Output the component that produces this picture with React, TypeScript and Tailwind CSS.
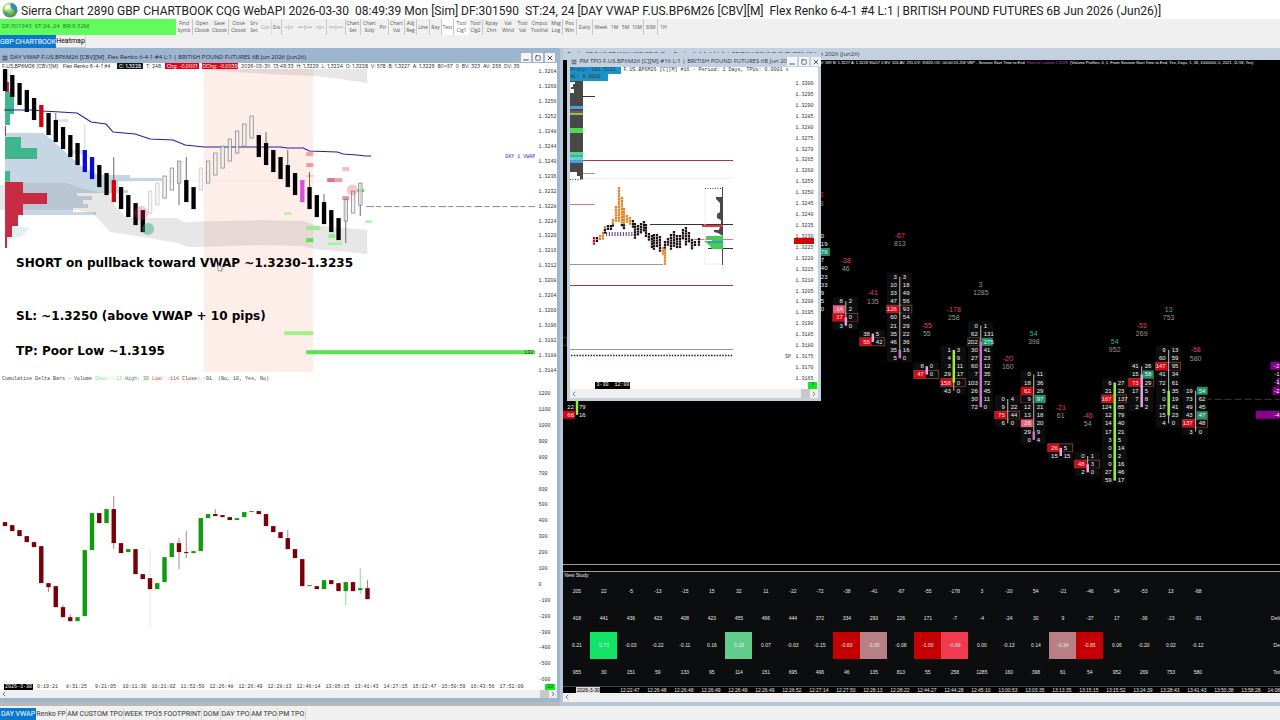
import { Menu, Minus, Square, X, ChevronLeft, ChevronRight } from "lucide-react";
import clsx from "clsx";

const SANS = "font-['Open_Sans','Noto_Sans',sans-serif]";
const UI = "font-['Roboto','Noto_Sans',sans-serif]";
const MONO = "font-['Liberation_Mono',monospace]";

const INSTRUMENT = "F.US.BP6M26 [CBV][M]  Flex Renko 6-4-1 #4 L:1 | BRITISH POUND FUTURES 6B Jun 2026 (Jun26)";

type Tool = [label: string, width: string, look?: string];

const tools: Tool[] = [
  ["Find\nSymb", "w-[17px]", "border-r"],
  ["Open\nCbook", "w-[18px]"],
  ["Save\nCbook", "w-[18px]", "border-r"],
  ["Close\nCbook", "w-[19px]"],
  ["Srv\nSet", "w-[12px]"],
  ["Con", "w-[12px]", "border-r opacity-50"],
  ["Dis", "w-[10px]", "border-r"],
  ["<|>", "w-[14px]"],
  ["<<|>>", "w-[18px]"],
  [">|<", "w-[13px]", "border-r"],
  [">>|<<", "w-[19px]", "border-r"],
  ["Chart\nSet", "w-[15px]", "border-r"],
  ["Chart\nStdy", "w-[17px]"],
  ["Ptr", "w-[11px]", "border-r"],
  ["Chart\nVal", "w-[16px]", "border-r"],
  ["Adj\nReg", "w-[12px]", "border-r"],
  ["Line", "w-[13px]", "border-r"],
  ["Ray", "w-[12px]", "border-r"],
  ["Text", "w-[12px]", "border-r bg-white"],
  ["Tool\nClg1", "w-[15px]", "bg-white"],
  ["Tool\nClg2", "w-[14px]", "border-r"],
  ["Rplay\nChrt", "w-[17px]"],
  ["Val\nWind", "w-[16px]"],
  ["Tool\nVal", "w-[13px]"],
  ["Cmput\nToolVal", "w-[21px]"],
  ["Msg\nLog", "w-[13px]", "border-r"],
  ["Pos\nWin", "w-[14px]", "border-r"],
  ["Daily", "w-[16px]", "border-r"],
  ["Week", "w-[16px]"],
  ["1M", "w-[11px]"],
  ["5M", "w-[11px]"],
  ["10M", "w-[13px]", "border-r"],
  ["30M", "w-[14px]", "border-r"],
  ["1H", "w-[11px]"],
];

const chartTabs: [string, string][] = [
  ["Renko FP", "w-[31px]"],
  ["AM CUSTOM TPO", "w-[57px]"],
  ["WEEK TPO", "w-[34px]"],
  ["5 FOOTPRINT", "w-[44px]"],
  ["DOM", "w-[19px]"],
  ["DAY TPO", "w-[30px]"],
  ["AM TPO", "w-[27px]"],
  ["PM TPO", "w-[28px]"],
];

const Globe = () => (
  <svg viewBox="0 0 16 16" className="size-4 shrink-0">
    <defs>
      <radialGradient id="globe" cx="0.4" cy="0.3" r="0.8">
        <stop offset="0" stopColor="#f4ffd0" />
        <stop offset="0.5" stopColor="#7cc242" />
        <stop offset="1" stopColor="#2f7d3a" />
      </radialGradient>
    </defs>
    <circle cx="8" cy="8" r="7.5" fill="url(#globe)" />
    <path d="M9 1C13 2 15.500 5 15.300 9C14 12 12 11 12 8C9 7 8 4 9 1Z" fill="#2f86c9" />
    <path d="M2 10C5 9 8 12 7 15C4 15 2 13 2 10Z" fill="#3b8fd0" opacity="0.7" />
    <path d="M4 3C6 2 8 3 8 5C6 6 5 8 3 8C2 6 3 4 4 3Z" fill="#fbffe8" opacity="0.8" />
  </svg>
);

const WindowButtons = () => (
  <div className="flex shrink-0 gap-[2px]">
    {[Minus, Square, X].map((Icon, i) => (
      <button key={i} type="button" aria-label={["Minimize", "Maximize", "Close"][i]} className="flex h-[9px] w-[10px] items-center justify-center bg-[#f4f5f7] text-black">
        <Icon size={i === 1 ? 6 : 8} strokeWidth={2} className={i === 0 ? "mt-1" : ""} />
      </button>
    ))}
  </div>
);

const ScrollBar = ({ className = "", thumb = true }: { className?: string; thumb?: boolean }) => (
  <div className={clsx("flex items-center justify-between bg-[#f0f0f0] text-gray-700", className)}>
    <button type="button" aria-label="Scroll left">
      <ChevronLeft size={8} />
    </button>
    {thumb && (
      <>
        <div className="ml-auto h-full w-[9px] bg-[#c8c8c8]" />
        <button type="button" aria-label="Scroll right">
          <ChevronRight size={8} />
        </button>
      </>
    )}
  </div>
);

const Axis = ({ labels, className }: { labels: (string | number)[]; className: string }) => (
  <div className={clsx("flex shrink-0 flex-col justify-between text-[5px] leading-[6px] text-[#333]", MONO, className)}>
    {labels.map((l, i) => (
      <span key={i}>{l}</span>
    ))}
  </div>
);

/* ---------- Day VWAP chart ---------- */

const STEP = 7.245;

// [top of body, kind, wick top, wick bottom]
type Bar = [number, string, number?, number?];
const renko: Bar[] = [
  [69, "d"], [75, "d"], [83, "d"], [90, "d"], [98, "d"], [105, "r"], [113, "d"], [120, "d", 113], [127, "d"], [135, "d"],
  [143, "d"], [150, "b", 125], [157, "b"], [165, "d"], [173, "d"], [180, "r", 157], [187, "d"], [195, "d"], [203, "d"], [210, "d"],
  [191, "f"], [183, "f"], [176, "u"], [168, "u"], [161, "u", 161, 205], [180, "d", 157], [187, "d"], [168, "f"], [161, "u"], [153, "u"],
  [146, "u"], [139, "u"], [131, "u"], [124, "u"], [116, "u"], [135, "d"], [143, "d", 132], [150, "d"], [157, "d"], [165, "d", 150],
  [173, "d"], [180, "m"], [187, "d", 172], [195, "d"], [202, "d", 194], [210, "d"], [218, "d"], [199, "u", 199, 243], [191, "u"], [183, "u", 183, 216],
];
const renkoFill: Record<string, string> = { d: "#000", r: "#d4000c", b: "#0808e0", m: "#d850dc", u: "#eef0ee", f: "#f1f1ef" };

// [top, bottom, up, wick top, wick bottom]
type Delta = [number, number, number, number?, number?];
const delta: Delta[] = [
  [522, 526, 0], [525, 531, 0], [530, 536, 0], [536, 542, 0], [542, 547, 0], [546, 583, 0], [583, 587, 0, 583, 592], [586, 607, 0],
  [607, 617, 0, 605, 617], [617, 621, 0, 614, 621], [617, 621, 1], [550, 616, 1], [513, 550, 1], [513, 523, 0], [509, 523, 1],
  [509, 543, 0, 496, 549], [543, 553, 0], [549, 552, 1], [549, 574, 0], [574, 579, 0], [578, 589, 0, 550, 627], [583, 589, 1],
  [557, 582, 1], [543, 557, 1], [543, 552, 0, 538, 569], [552, 553, 0, 531, 558], [551, 553, 1], [518, 551, 1], [514, 518, 1],
  [514, 516, 0, 509, 516], [515, 517, 0], [517, 520, 0], [518, 520, 1], [512, 517, 1], [511, 512, 1], [511, 514, 0], [514, 526, 0],
  [526, 532, 0], [532, 538, 0], [538, 549, 0, 530, 549], [549, 558, 0], [559, 586, 0], [585, 586, 1], [586, 589, 0], [580, 589, 1],
  [580, 584, 0], [583, 591, 0], [582, 591, 1, 582, 605], [582, 591, 0], [588, 590, 1, 568, 594], [588, 599, 0, 580, 599],
];

const markers: [number, number, number, number, string][] = [
  [306, 152, 7, 4, "#f5a0a8"], [306, 163, 7, 4, "#f59aa2"], [306, 175, 7, 2, "#f9c0bc"], [327, 178, 8, 4, "#cf7c86"], [335, 178, 7, 4, "#eaa3aa"],
  [342, 167, 7, 4, "#f6bcc2"], [357, 189, 7, 3, "#58e070"], [365, 220, 7, 3, "#b8f5b8"], [284, 212, 7, 3, "#bdeea6"], [306, 226, 14, 4, "#a5e59b"],
  [306, 238, 7, 4, "#5ce04c"], [328, 234, 7, 4, "#90f08a"], [328, 242, 14, 3, "#a6f2a0"], [284, 331, 29, 4, "#a2f088"],
];

const VwapChart = () => (
  <svg viewBox="0 69 535 305" className="min-w-0 flex-1 bg-white">
    <rect x="204" y="69" width="109" height="303" fill="#fdeee9" />
    <path d="M5 69H14L9 78L12 82H5ZM5 225L30 228L22 236L8 240Z" fill="#dff0ee" />
    <path
      d="M5 133H43L52 140L63 150L74 160L84 168L98 175H130V178H162V181H118V190H128V193H77V196H92V200H83V204H88V208H73V212H96V215H5Z"
      fill="#c6d6e5"
    />
    <path d="M55 119H68V122H60ZM68 150H86V154H72Z" fill="#dbe4ee" />
    <path d="M200 69H367V83L340 79L315 76L285 75L250 73L220 71Z" fill="#8a8080" opacity="0.2" />
    <path
      d="M0 185L25 183L66 183L80 188L108 194L115 206L127 218L177 218L184 222L260 220L303 221L315 225L367 230V254L315 249L303 246L260 245L200 247L187 247L177 243L130 235L110 232L93 213L77 210L0 210Z"
      fill="#807878"
      opacity="0.18"
    />
    <path d="M5 92H14V114H10V125H5ZM5 137H21V148H37V159H5ZM5 171H10V182H5Z" fill="#40b68c" />
    <path d="M5 182H23V193H47V204H23V215H18V226H12V237H7V248H5ZM5 82H9V92H5ZM5 126H6V136H5Z" fill="#c82c44" />
    <path d="M0 181H350" stroke="#d9cfc9" strokeWidth="0.5" opacity="0.6" />
    <path d="M366 206.500H535" stroke="#555" strokeDasharray="8 2 5 3" strokeWidth="0.7" />

    {markers.map(([x, y, w, h, fill]) => (
      <rect key={`${x}-${y}`} x={x} y={y} width={w} height={h} fill={fill} />
    ))}
    <path d="M4 110H33L43 111L77 113L91 122L106 124L113 132L135 134L150 139L173 140L185 145L204 147H280L287 148H303L309 151L337 152L343 154L357 155L365 156H371" fill="none" stroke="#2020a0" strokeWidth="1.100" />
    {renko.map(([y, kind, hi, lo], i) => {
      const x = 5 + STEP * i;
      const hollow = kind === "u" || kind === "f";
      return (
        <g key={i}>
          {hi && <path d={`M${x} ${hi}V${lo ?? y}`} stroke={kind === "b" ? "#ccc" : "#444"} strokeWidth="0.8" />}
          <rect
            x={hollow ? x - 1.6 : x - 2.1}
            y={y}
            width={hollow ? 3.4 : 4.3}
            height="22"
            fill={renkoFill[kind]}
            fillOpacity={hollow ? 0.7 : 1}
            stroke={kind === "u" ? "#8b8b8b" : kind === "f" ? "#cdcdcd" : "none"}
            strokeWidth="0.8"
          />
        </g>
      );
    })}
    <circle cx="141" cy="213" r="7" fill="#d83a58" opacity="0.3" />
    <circle cx="148" cy="229" r="6" fill="#2fa878" opacity="0.45" />
    <circle cx="352" cy="190" r="5.500" fill="#e04858" opacity="0.3" />
    <rect x="342" y="196" width="7" height="4" fill="#d8586a" opacity="0.6" />

    <rect x="306" y="350" width="229" height="4" fill="#54e84c" />
    <g className={clsx("text-[5px]", MONO)}>
      <text x="505" y="158" fill="#3030b8">DAY 1 VWAP</text>
      <text x="524" y="354" fill="#064006">132</text>
    </g>
    <g className="font-['DejaVu_Sans',sans-serif] text-[12px] font-bold">
      <text x="16" y="267">SHORT on pullback toward VWAP ~1.3230–1.3235</text>
      <text x="16" y="320">SL: ~1.3250 (above VWAP + 10 pips)</text>
      <text x="16" y="355">TP: Poor Low ~1.3195</text>
    </g>
    <path d="M218 264V271L220 270L221 272L222 271L221 269H223Z" fill="#fff" stroke="#555" strokeWidth="0.5" />
  </svg>
);

const DeltaChart = () => (
  <svg viewBox="0 384 535 299" className="min-w-0 flex-1 bg-white">
    {delta.map(([top, bottom, up, hi, lo], i) => {
      const x = 5 + STEP * i;
      return (
        <g key={i}>
          {hi && <path d={`M${x} ${hi}V${lo}`} stroke={i === 20 ? "#ddd" : up ? "#60d868" : "#a86068"} strokeWidth="0.8" />}
          <rect x={x - 2.2} y={top} width="4.400" height={bottom - top} fill={up ? "#0f9a10" : "#7a0008"} />
        </g>
      );
    })}
  </svg>
);

const vwapPrices = Array.from({ length: 21 }, (_, i) => (1.3264 - i * 0.0004).toFixed(4));
const deltaTicks = Array.from({ length: 19 }, (_, i) => 1200 - i * 100);
const vwapTimes = [
  "0:19:21", "8:31:25", "9:21:05", "10:11:30", "10:21:02", "11:52:50", "12:26:48", "12:26:49", "12:28:13",
  "12:46:14", "13:05:15", "13:41:43", "14:27:15", "15:12:47", "15:50:59", "16:43:56", "17:52:09",
];

const VwapWindow = () => (
  <section className="min-w-0 flex-[7] border-r-[3px] border-b-[4px] border-[#9db5cf] bg-white">
    <header className="flex h-[15px] items-end justify-between bg-[#9db5cf] pr-[2px] pb-px pl-[2px]">
      <div className="flex items-center gap-[2px] text-[6px] leading-[9px] whitespace-pre text-[#223]">
        <Menu size={6} strokeWidth={3} />
        DAY VWAP {INSTRUMENT}
      </div>
      <WindowButtons />
    </header>
    <div className="flex h-[6px] gap-[3px] overflow-hidden pl-[2px] font-['Inter',sans-serif] text-[5px] leading-[6px] whitespace-pre text-[#333]">
      <span className="w-[112px] shrink-0">F.US.BP6M26 [CBV][M]   Flex Renko 6-4-1 #4</span>
      <span className="w-[26px] shrink-0 bg-[#101820] text-center text-white">C: 1.3228</span>
      <span className="w-[16px] shrink-0">T: 248</span>
      <span className="w-[34px] shrink-0 bg-[#e00010] text-center text-white">Chg: -0.0001</span>
      <span className="w-[36px] shrink-0 bg-[#e00010] text-center text-white">OChg: -0.0039</span>
      <span>
        2026-03-30  13:49:33  H: 1.3229  L: 1.3224  O: 1.3228  V: 578  B: 1.3227  A: 1.3229  80x57  0  BV: 323  AV: 255  DV: 35
      </span>
    </div>
    <div className="flex">
      <VwapChart />
      <Axis labels={vwapPrices} className="w-[22px] pl-[3px]" />
    </div>
    <div className={clsx("flex h-[10px] gap-[3px] pl-[2px] text-[5px] leading-[10px] text-[#444]", MONO)}>
      <span>Cumulative Delta Bars - Volume</span>
      <span className="text-[#70f080]">Open: -13</span>
      <span className="text-[#4a8a50]">High: 30</span>
      <span className="text-[#d04050]">Low: -114</span>
      <span>Close: -91</span>
      <span className="pl-[3px]">(No, 10, Yes, No)</span>
    </div>
    <div className="flex">
      <DeltaChart />
      <Axis labels={deltaTicks} className="w-[22px] pt-[7px] pl-[3px]" />
    </div>
    <div className={clsx("flex h-[7px] items-center overflow-hidden text-[5px] leading-[6px] text-[#333]", MONO)}>
      <span className="ml-1 w-[29px] shrink-0 bg-black text-center text-white">2026-3-30</span>
      {vwapTimes.map((t) => (
        <span key={t} className="w-[29px] shrink-0 text-center">
          {t}
        </span>
      ))}
      <span className="mr-[2px] ml-auto w-[10px] shrink-0 bg-[#10e820] text-center text-green-900">22</span>
    </div>
    <ScrollBar className="h-[8px]" />
  </section>
);

/* ---------- Footprint chart ---------- */

// flags: r red bid, p pink bid, l outlined bid, g green ask, o outlined row
type Cell = [bid: string, ask: string, flags?: string];
type Column = { x: number; row: number; delta: string; total: string; cells: Cell[]; body?: [number, number, string] };

const VIOLET = "#cc70d4";
const PINK = "#e8a0e8";
const LIME = "#98f03c";

const columns: Column[] = [
  { x: 846, row: 3, delta: "-38", total: "46", cells: [["8", "2"], ["14", "2", "p"], ["17", "0", "ro"], ["3", "0"]], body: [2, 3, PINK] },
  { x: 873, row: 7, delta: "-41", total: "135", cells: [["38", "5"], ["58", "42", "ro"]], body: [0, 1, PINK] },
  {
    x: 900, row: 0, delta: "-67", total: "813", body: [9, 10, VIOLET],
    cells: [["3", "3"], ["10", "18"], ["33", "49"], ["47", "56"], ["126", "93", "ro"], ["60", "54"], ["21", "29"], ["35", "22"], ["46", "36"], ["35", "16"], ["5", "0"]],
  },
  { x: 927, row: 11, delta: "-55", total: "55", cells: [["8", "0"], ["47", "0", "ro"]], body: [0, 1, PINK] },
  { x: 954, row: 9, delta: "-178", total: "258", cells: [["1", "3"], ["4", "9"], ["3", "11"], ["29", "17"], ["158", "0", "ro"], ["43", "0"]], body: [0, 4, LIME] },
  {
    x: 981, row: 6, delta: "3", total: "1285", body: [2, 10, VIOLET],
    cells: [["0", "1"], ["62", "131"], ["202", "275", "lg"], ["30", "41"], ["27", "23"], ["60", "12"], ["7", "35"], ["103", "72"], ["26", "45"], ["30", "11"], ["72", "0"]],
  },
  { x: 1008, row: 15, delta: "-20", total: "160", cells: [["0", "4"], ["9", "22"], ["75", "44", "ro"], ["6", "0"]] },
  {
    x: 1034, row: 12, delta: "54", total: "398", body: [7, 8, VIOLET],
    cells: [["0", "11"], ["18", "36"], ["62", "29", "r"], ["9", "97", "lg"], ["12", "21"], ["13", "18"], ["28", "20", "p"], ["29", "9"], ["0", "4"]],
  },
  { x: 1061, row: 21, delta: "-21", total: "61", cells: [["26", "5", "ro"], ["15", "15"]], body: [0, 1, PINK] },
  { x: 1088, row: 22, delta: "-46", total: "54", cells: [["0", "1"], ["48", "3", "ro"], ["2", "0"]], body: [1, 2, PINK] },
  {
    x: 1115, row: 13, delta: "54", total: "952", body: [0, 12, LIME],
    cells: [["6", "27"], ["21", "23"], ["167", "137", "ro"], ["124", "85"], ["12", "79"], ["14", "40"], ["17", "21"], ["3", "5"], ["0", "14"], ["0", "2"], ["0", "16"], ["27", "46"], ["59", "17"]],
  },
  { x: 1142, row: 11, delta: "-53", total: "269", cells: [["41", "26"], ["15", "58", "g"], ["73", "29", "ro"], ["17", "5"], ["7", "8"], ["2", "2"]], body: [1, 5, PINK] },
  {
    x: 1169, row: 9, delta: "13", total: "753", body: [5, 8, LIME],
    cells: [["9", "13"], ["60", "59"], ["147", "95", "ro"], ["41", "34"], ["72", "61"], ["5", "35"], ["0", "19"], ["17", "41"], ["15", "23"], ["4", "0"]],
  },
  { x: 1196, row: 14, delta: "-68", total: "580", cells: [["19", "54", "g"], ["73", "62"], ["49", "45"], ["43", "47", "g"], ["137", "48", "ro"], ["3", "0"]] },
];

const ROW = 8.16;
const rowY = (r: number) => 276.7 + ROW * r;

const FootprintColumn = ({ x, row, delta, total, cells, body }: Column) => (
  <g>
    <text x={x} y={rowY(row - 5) + 2.5} textAnchor="middle" className="text-[7px]" fill={delta.startsWith("-") ? "#e84058" : "#2fb88c"}>
      {delta}
    </text>
    <text x={x} y={rowY(row - 4) + 2.5} textAnchor="middle" className="text-[7px]" fill="#989898">
      {total}
    </text>
    {cells.map(([bid, ask, flags = ""], i) => {
      const y = rowY(row + i);
      const left = flags.includes("r") ? "#dc0410" : flags.includes("p") ? "#f0607c" : "#0e0e0e";
      return (
        <g key={i}>
          <rect x={x - 13} y={y - 4} width="12" height="8" fill={left} stroke={flags.includes("l") ? "#7a4540" : "none"} strokeWidth="0.7" />
          <rect x={x + 1} y={y - 4} width="11" height="8" fill={flags.includes("g") ? "#20946c" : "#0e0e0e"} />
          {flags.includes("o") && <rect x={x - 13} y={y - 4} width="25" height="8" fill="none" stroke="#8a4a3c" strokeWidth="0.8" />}
          <text x={x - 3} y={y + 2} textAnchor="end">{bid}</text>
          <text x={x + 3} y={y + 2}>{ask}</text>
        </g>
      );
    })}
    <path d={`M${x} ${rowY(row)}V${rowY(row + cells.length - 1)}`} stroke="#c8c8c8" strokeWidth="1" />
    {body && <path d={`M${x} ${rowY(row + body[0])}V${rowY(row + body[1])}`} stroke={body[2]} strokeWidth="2.500" />}
  </g>
);

const hiddenAsks = ["0", "19", "76", "7", "40", "23", "33", "9", "5", "0"];

const FootprintChart = () => (
  <svg viewBox="563 66 717 498" className="block w-full bg-black font-['Liberation_Sans',sans-serif] text-[6px]" fill="#f0f0f0">
    <path d="M1205 399.500H1280" stroke="#3c3c3c" strokeDasharray="7 3" />
    <rect x="820" y="248" width="10" height="8" fill="#20946c" />
    <text x="820" y="197" fill="#d83a50" className="text-[7px]">2</text>
    <text x="820" y="206" fill="#8a8a8a" className="text-[7px]">8</text>
    {hiddenAsks.map((v, i) => (
      <text key={i} x="821" y={rowY(i - 5) + 2}>{v}</text>
    ))}
    {columns.map((c) => (
      <FootprintColumn key={c.x} {...c} />
    ))}
    <rect x="563" y="411" width="12" height="8" fill="#dc0410" />
    <text x="574" y="409" textAnchor="end">22</text>
    <text x="579" y="409">79</text>
    <text x="574" y="417" textAnchor="end">66</text>
    <text x="579" y="417">16</text>
    <path d="M577 395V415" stroke={LIME} strokeWidth="2.500" />
    <path d="M563 337.500H567V345.500H563" stroke="#6a3a30" strokeWidth="0.8" fill="none" />
    <path d="M1271 362H1280V370H1271ZM1277 378H1280V386H1277ZM1273 387H1280V395H1273ZM1256 411H1280V419H1256Z" fill="#8a0090" />
    <g fill="#fff" textAnchor="end">
      <text x="1280" y="368">-2</text>
      <text x="1280" y="376">-1</text>
      <text x="1280" y="384">-1</text>
      <text x="1280" y="393">-2</text>
      <text x="1280" y="417">-4</text>
    </g>
  </svg>
);

const studyRows = [
  ["205", "22", "-5", "-13", "-15", "15", "32", "11", "-22", "-72", "-38", "-41", "-67", "-55", "-178", "3", "-20", "54", "-21", "-46", "54", "-53", "13", "-68"],
  ["418", "441", "436", "423", "408", "423", "455", "466", "444", "372", "334", "293", "226", "171", "-7", "-4", "-24", "30", "9", "-37", "17", "-36", "-23", "-91"],
  ["0.21", "0.73", "-0.03", "-0.22", "-0.11", "0.16", "0.28", "0.07", "-0.03", "-0.15", "-0.83", "-0.30", "-0.08", "-1.00", "-0.69", "0.00", "-0.13", "0.14", "-0.34", "-0.85", "0.06", "-0.20", "0.02", "-0.12"],
  ["955", "30", "151", "59", "133", "95", "114", "151", "695", "496", "46", "135", "813", "55", "258", "1285", "160", "398", "61", "54", "952", "269", "753", "580"],
];
const studyLabels = ["", "Delt", "De", "Tot"];
const studyHeat: Record<number, string> = {
  1: "bg-[#12e468]", 6: "bg-[#62cc8c]", 10: "bg-[#c40004]", 11: "bg-[#b87f84]", 13: "bg-[#c40004]", 14: "bg-[#f03a50]", 18: "bg-[#b87f84]", 19: "bg-[#c40004]",
};
const studyTimes = [
  "12:22:47", "12:26:48", "12:26:48", "12:26:49", "12:26:49", "12:26:49", "12:26:52", "12:27:14", "12:27:50", "12:28:13", "12:28:22", "12:44:27", "12:44:28",
  "12:45:10", "13:00:53", "13:03:35", "13:13:35", "13:15:15", "13:15:52", "13:24:39", "13:28:43", "13:41:43", "13:50:38", "13:58:28",
];

const StudyPane = () => (
  <div className="overflow-hidden border-t border-[#9a9a9a] bg-[#0b0d0e] font-['Liberation_Sans',sans-serif] text-[5px] leading-[6px] text-[#e8e8e8]">
    <h2 className="h-[6px] pl-px">New Study</h2>
    <table className="w-full table-fixed border-collapse text-center">
      <tbody>
        {studyRows.map((row, r) => (
          <tr key={r} className="h-[27px]">
            {row.map((v, c) => (
              <td key={c} className={clsx("w-[27px] p-0", r === 2 && studyHeat[c])}>
                {v}
              </td>
            ))}
            <td className="p-0 text-right">{studyLabels[r]}</td>
          </tr>
        ))}
      </tbody>
    </table>
    <div className="flex h-[7px] overflow-hidden border-t border-[#444] bg-black whitespace-nowrap">
      <div className="flex w-[53px] shrink-0 pl-[13px]">
        <span className="w-[24px] bg-[#ddd] text-center text-black">2026-3-30</span>
      </div>
      {studyTimes.map((t, i) => (
        <span key={i} className="w-[27px] shrink-0 text-center">
          {t}
        </span>
      ))}
      <span className="ml-auto">14:08</span>
    </div>
  </div>
);

/* ---------- TPO window ---------- */

// [x, top, bottom, orange down to]
const tpoColumns: [number, number, number, number][] = [
  [594, 236, 244, 0], [597, 236, 242, 0], [600, 234, 240, 237], [603, 231, 238, 237], [605, 225, 232, 227], [608, 224, 230, 0], [611, 224, 229, 0], [613, 218, 227, 222],
  [616, 205, 222, 222], [619, 186, 222, 222], [622, 196, 227, 222], [624, 207, 228, 222], [627, 214, 222, 222], [630, 216, 224, 222], [633, 219, 227, 0], [635, 222, 239, 0],
  [638, 224, 234, 0], [641, 222, 232, 0], [644, 220, 230, 0], [646, 223, 237, 0], [649, 232, 241, 0], [652, 234, 248, 0], [654, 233, 250, 0], [657, 233, 247, 0],
  [660, 235, 250, 0], [663, 246, 254, 256], [665, 240, 263, 0], [668, 237, 246, 0], [671, 233, 249, 0], [674, 230, 246, 0], [677, 234, 248, 0], [680, 234, 247, 0],
  [683, 228, 240, 0], [686, 226, 246, 0], [689, 231, 243, 0], [692, 238, 249, 0], [695, 240, 246, 0], [699, 237, 244, 0],
];

const tpoStripes: [number, number, string][] = [
  [105, 3, "#4c9ce4"], [110, 2, "#c83a3a"], [112, 2, "#58d858"], [127, 5, "#4fdc54"], [151, 3, "#4fdc74"], [154, 2, "#4c9ce4"], [156, 3, "#60e0a0"], [159, 3, "#4c9ce4"],
];

const TpoChart = () => (
  <svg viewBox="570 80 224 301" className="min-w-0 flex-1">
    <path d="M570 80H583V178H580V175H577V171H570Z" fill="#484848" />
    <path d="M570 81H575V83H573V86H571V88H574V92H570Z" fill="#fff" />
    {tpoStripes.map(([y, h, fill]) => (
      <rect key={y} x="570" y={y} width="13" height={h} fill={fill} />
    ))}
    <path d="M583 95.500H595M650 223.500H733M708 247.500H733" stroke="#333" />
    <path d="M583 159.500H733M570 284.500H733" stroke="#a83848" strokeWidth="1.200" />
    <path d="M570 203.500H595M694 238.500H733" stroke="#d87888" />
    <path d="M583 172.500H595M570 263.500H663M570 348.500H733" stroke="#999" />
    <path d="M583 177.500H733M705 186V263H723" stroke="#eee" fill="none" />
    <path d="M570 178.500H583M705 187.500H723" stroke="#444" strokeDasharray="1 1.500" />
    <path d="M571 354.500H733" stroke="#301828" strokeWidth="1.500" strokeDasharray="1.500 1.300" />
    {Array.from({ length: 11 }, (_, i) => (
      <rect key={i} x={606 + i * 2.8} y="231" width="1.200" height="4" fill="#7c4a88" />
    ))}
    {tpoColumns.map(([x, top, bottom, orange]) =>
      Array.from({ length: Math.round((bottom - top) / 2.7) }, (_, i) => {
        const y = top + i * 2.7;
        const tail = x === 665 && y > 248;
        return <rect key={`${x}-${i}`} x={x - 1.2} y={y} width="2.300" height="2.300" fill={x < 596 ? "#b81848" : y < orange || tail ? "#e08424" : "#1c1014"} />;
      }),
    )}
    <path d="M723 186V264H722V248L719 247L716 245H723V235L718 232L714 231V229H719L721 222V219L717 217V213L720 211V202L716 198V196H722V186Z" fill="#484848" />
    <path d="M702 224H723V226H702Z" fill="#e83444" />
    <path d="M706 235H723V248H712L709 244L704 240H712V238H706Z" fill="#44cc58" />
    <path d="M708 240H723V242H708Z" fill="#3a9ca4" />
    <text x="785" y="357" className={clsx("text-[5px]", MONO)} fill="#444">SP</text>
  </svg>
);

const tpoPrices = Array.from({ length: 28 }, (_, i) => (1.33 - i * 0.0005).toFixed(4));

const TpoWindow = () => (
  <section className="absolute top-[5px] left-[4px] z-10 w-[254px] border-[3px] border-t-0 border-[#c3d0df] bg-white">
    <header className="flex h-[14px] items-end justify-between bg-[#c3d0df] pb-px">
      <div className="flex items-center gap-[2px] pl-px text-[6px] leading-[9px] whitespace-nowrap text-[#334]">
        <Menu size={6} strokeWidth={3} className="shrink-0" />
        PM TPO F.US.BP6M26 [C][M] #16 L:1 | BRITISH POUND FUTURES 6B Jun 20
      </div>
      <WindowButtons />
    </header>
    <div className={clsx("h-[14px] text-[5px] leading-[7px] text-[#333]", MONO)}>
      <p className="flex gap-[2px] whitespace-nowrap">
        <span className="w-[51px] shrink-0 bg-[#1a94c8]">Proxy: 191.5122</span>
        F.US.BP6M26 [C][M] #16 - Period: 1 Days, TPUs: 0.0001 x
      </p>
      <p className="w-[38px] bg-[#1a94c8]">HL: 0.0000</p>
    </div>
    <div className="relative flex">
      <TpoChart />
      <Axis labels={tpoPrices} className="w-[24px] pl-px" />
      <span className="absolute top-[157px] right-[4px] h-[6px] w-[20px] bg-[#d40008]" />
    </div>
    <div className={clsx("flex h-[7px] justify-between text-[5px] leading-[7px]", MONO)}>
      <span className="ml-[25px] bg-black px-px whitespace-pre text-white">3-30  12:00</span>
      <span className="mr-px w-[9px] bg-[#10e820] text-center text-green-900">7</span>
    </div>
    <ScrollBar className="h-[9px]" />
  </section>
);

const FootprintWindow = () => (
  <section className="relative min-w-0 flex-[9] border-b-[4px] border-l-[3px] border-[#b8c7d7] bg-black">
    <header className="flex h-[12px] items-center bg-[#c3d0df] text-[6px] whitespace-pre text-[#334]">
      <span className="w-[296px] text-right">Renko FP {INSTRUMENT}</span>
    </header>
    <div className="ml-[257px] flex h-[6px] overflow-hidden font-['Liberation_Sans',sans-serif] text-[4px] leading-[6px] whitespace-pre text-white">
      <span>V: 589 B: 1.3227 A: 1.3228 80x57 0 BV: 324 AV: 255 DV: 35820 OD: 00:00:53.258 VBP - Session Start Time to End  </span>
      <span className="text-[#c040d0]">Point of Control 1.3228</span>
      <span>  (Volume Profiles, 0, 1, From Session Start Time to End, Yes, Days, 1, 58, 1000000, 0, 2021, 11:58, Yes)</span>
    </div>
    <FootprintChart />
    <div className="h-[7px] border-t border-[#9a9a9a] bg-black" />
    <StudyPane />
    <ScrollBar className="h-[9px]" thumb={false} />
    <TpoWindow />
  </section>
);

const App = () => {
  return (
    <div className={clsx("flex min-h-screen flex-col overflow-x-hidden bg-[#f0f0f0] text-black", SANS)}>
      <header className="flex h-[19px] items-end gap-[3px] overflow-hidden bg-white pb-px pl-[2px]">
        <Globe />
        <h1 className={clsx("text-[12px] leading-[14px] whitespace-pre text-[#222]", UI)}>
          Sierra Chart 2890 GBP CHARTBOOK CQG WebAPI 2026-03-30  08:49:39 Mon [Sim] DF:301590  ST:24, 24 [DAY VWAP {INSTRUMENT}]
        </h1>
      </header>
      <div className="flex h-[16px] items-stretch text-[#555]">
        <div className="w-[176px] shrink-0 bg-[#62fb5e] pl-[2px] text-[6px] leading-[15px] whitespace-pre text-[#1c7a20]">DF:301943  ST:24, 24  BR:9.32M</div>
        {tools.map(([label, width, look]) => (
          <button
            key={label}
            type="button"
            className={clsx("flex shrink-0 items-center justify-center border-[#c8c8c8] text-center text-[5px] leading-[7px] whitespace-pre", width, look)}
          >
            {label}
          </button>
        ))}
      </div>
      <nav className={clsx("flex h-[13px] text-[7px] leading-[12px]", UI)}>
        <button type="button" className="w-[56px] bg-[#0c78d0] whitespace-nowrap text-white">
          GBP CHARTBOOK
        </button>
        <button type="button" className="w-[30px] border-r border-b border-[#ccc]">
          Heatmap
        </button>
      </nav>
      <main className="flex items-start bg-[#b9b9b9]">
        <VwapWindow />
        <FootprintWindow />
      </main>
      <nav className={clsx("mt-[2px] flex h-[12px] items-stretch text-[7px] leading-[12px] text-[#333]", UI)}>
        <button type="button" className="w-[36px] shrink-0 bg-[#0c78d0] whitespace-nowrap text-white">
          DAY VWAP
        </button>
        {chartTabs.map(([label, width]) => (
          <button key={label} type="button" className={clsx("shrink-0 border-r border-[#d4d4d4] whitespace-nowrap", width)}>
            {label}
          </button>
        ))}
      </nav>
    </div>
  );
};
export default App;
